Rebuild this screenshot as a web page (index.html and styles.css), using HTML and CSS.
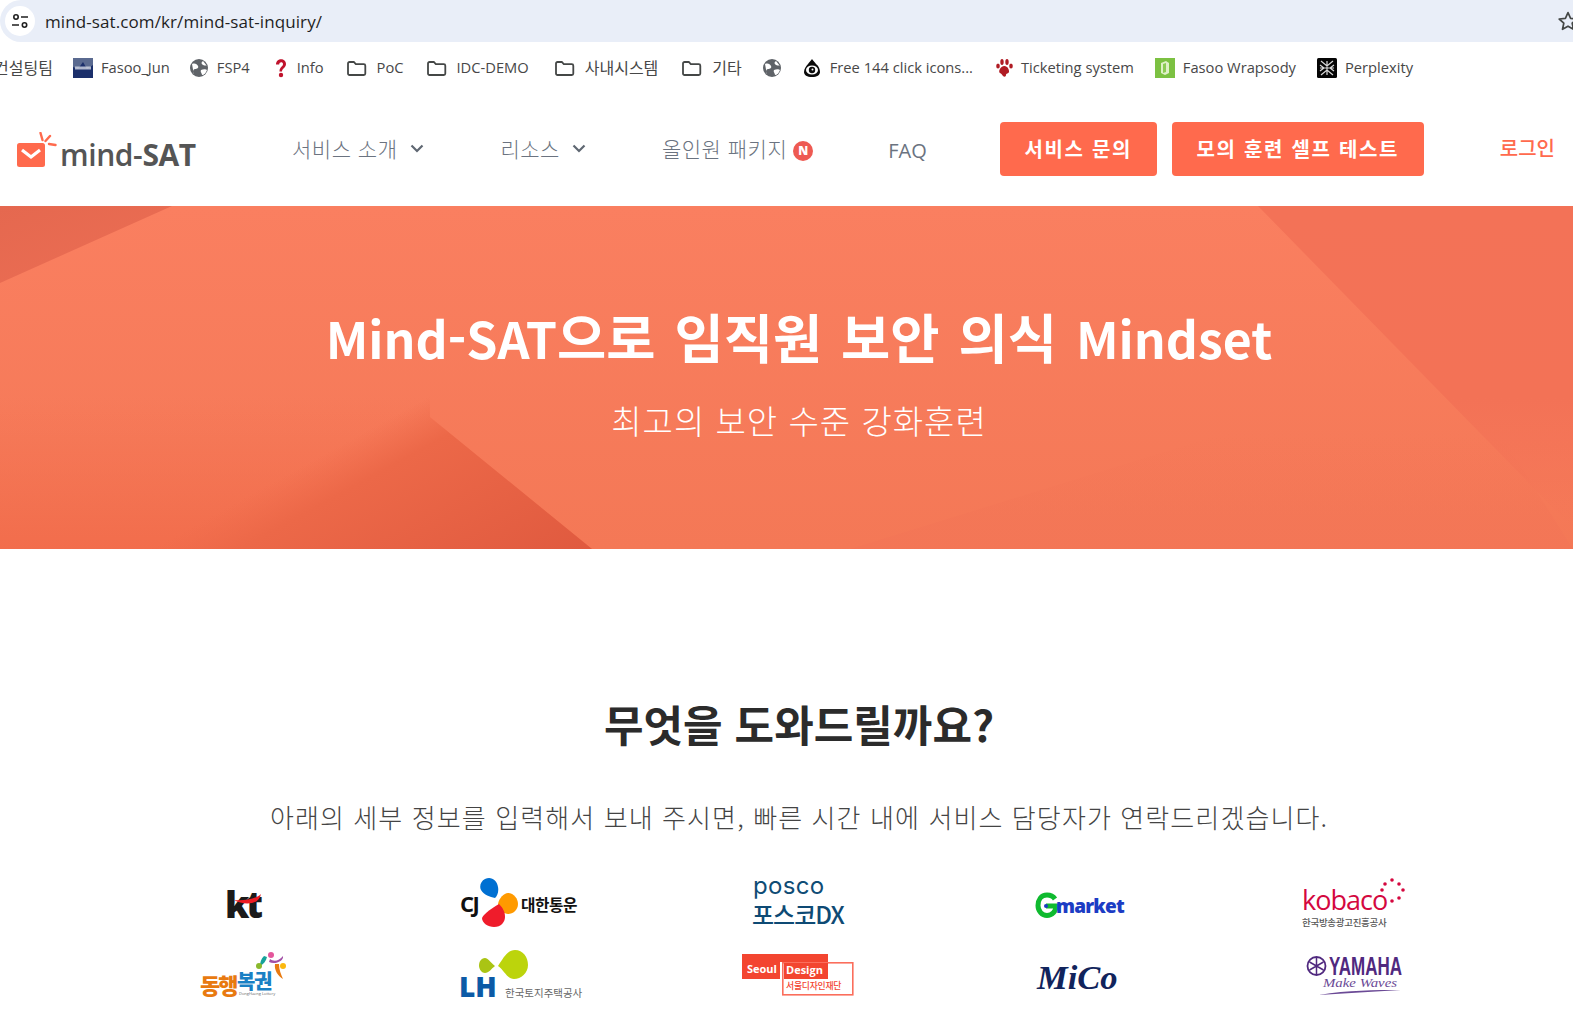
FILE: index.html
```html
<!DOCTYPE html>
<html lang="ko">
<head>
<meta charset="utf-8">
<title>mind-SAT 문의</title>
<link rel="stylesheet" href="styles.css">
</head>
<body>
<div class="omnibar">
  <span class="site-chip">
    <svg width="20" height="20" viewBox="0 0 20 20" fill="none" stroke="#1f1f1f" stroke-width="1.6"><circle cx="6" cy="6" r="2.2"/><path d="M11 6h7M2 14h7"/><circle cx="14.5" cy="14" r="2.2"/></svg>
  </span>
  <span class="url">mind-sat.com/kr/mind-sat-inquiry/</span>
  <svg class="star" width="22" height="22" viewBox="0 0 22 22" fill="none" stroke="#444746" stroke-width="1.7" stroke-linejoin="round"><path d="M11 2.6l2.6 5.7 6.2.7-4.6 4.2 1.3 6.1-5.5-3.1-5.5 3.1 1.3-6.1L2.2 9l6.2-.7z"/></svg>
</div>

<div class="bookmarks">
  <span class="bm bm-cut ko">컨설팅팀</span>
  <span class="bm bm-a"><svg width="20" height="20" viewBox="0 0 20 20"><rect width="20" height="20" fill="#1b2f6b"/><path d="M0 0h20v7l-6 4-4-7-5 7-5-2z" fill="#5a6a90"/><rect x="2" y="8.500" width="16" height="3" fill="#d5d9e6" opacity=".8"/></svg>Fasoo_Jun</span>
  <span class="bm bm-b"><svg width="20" height="20" viewBox="0 0 20 20"><circle cx="10" cy="10" r="9" fill="#5f6368"/><path d="M3 6c3-1 5 0 6 2s-1 3-3 3-2 3-1 6M14 3c-2 1-2 3 0 4s4 0 4 1M12 12c2-1 5-1 6 0-1 3-3 5-5 5 0-2-2-3-1-5z" fill="#fff"/></svg>FSP4</span>
  <span class="bm bm-c"><svg width="16" height="20" viewBox="0 0 16 20"><path d="M3 6.500c0-7 10-7 10-.5 0 4-4 4-4 7.500H6.500c0-5 3.500-4.500 3.500-7.500 0-2.500-3.800-2.500-3.800.5z" fill="#c0132c"/><circle cx="8" cy="17" r="2.200" fill="#c0132c"/></svg>Info</span>
  <span class="bm bm-d folder-item"><svg width="21" height="20" viewBox="0 0 21 20" fill="none" stroke="#444746" stroke-width="1.8"><path d="M2 5.500a1.500 1.500 0 0 1 1.500-1.500h4.300l2 2.200h8a1.500 1.500 0 0 1 1.500 1.500v7.800a1.500 1.500 0 0 1-1.500 1.500h-14.300a1.500 1.500 0 0 1-1.500-1.500z"/></svg>PoC</span>
  <span class="bm bm-e folder-item"><svg width="21" height="20" viewBox="0 0 21 20" fill="none" stroke="#444746" stroke-width="1.8"><path d="M2 5.500a1.500 1.500 0 0 1 1.500-1.500h4.300l2 2.200h8a1.500 1.500 0 0 1 1.500 1.500v7.800a1.500 1.500 0 0 1-1.500 1.500h-14.300a1.500 1.500 0 0 1-1.500-1.500z"/></svg>IDC-DEMO</span>
  <span class="bm bm-f folder-item ko"><svg width="21" height="20" viewBox="0 0 21 20" fill="none" stroke="#444746" stroke-width="1.8"><path d="M2 5.500a1.500 1.500 0 0 1 1.500-1.500h4.300l2 2.200h8a1.500 1.500 0 0 1 1.500 1.500v7.800a1.500 1.500 0 0 1-1.500 1.500h-14.300a1.500 1.500 0 0 1-1.500-1.500z"/></svg>사내시스템</span>
  <span class="bm bm-g folder-item ko"><svg width="21" height="20" viewBox="0 0 21 20" fill="none" stroke="#444746" stroke-width="1.8"><path d="M2 5.500a1.500 1.500 0 0 1 1.500-1.500h4.300l2 2.200h8a1.500 1.500 0 0 1 1.500 1.500v7.800a1.500 1.500 0 0 1-1.500 1.500h-14.300a1.500 1.500 0 0 1-1.500-1.500z"/></svg>기타</span>
  <span class="bm bm-h"><svg width="20" height="20" viewBox="0 0 20 20"><circle cx="10" cy="10" r="9" fill="#5f6368"/><path d="M3 6c3-1 5 0 6 2s-1 3-3 3-2 3-1 6M14 3c-2 1-2 3 0 4s4 0 4 1M12 12c2-1 5-1 6 0-1 3-3 5-5 5 0-2-2-3-1-5z" fill="#fff"/></svg></span>
  <span class="bm bm-i"><svg width="18" height="20" viewBox="0 0 18 20"><path d="M9 1c1 2 3 3 4 5 3 2 4 6 4 8 0 3-3 5-8 5s-8-2-8-5c0-3 2-6 4-8 1-2 3-3 4-5z" fill="#0a0a0a"/><ellipse cx="9" cy="12" rx="6" ry="4.500" fill="#fff"/><circle cx="9" cy="12" r="3.200" fill="#0a0a0a"/><circle cx="9.500" cy="11.500" r="1" fill="#fff"/></svg>Free 144 click icons...</span>
  <span class="bm bm-j"><svg width="18" height="20" viewBox="0 0 18 20" fill="#b01c24"><ellipse cx="3" cy="8" rx="1.800" ry="2.600"/><ellipse cx="7" cy="4" rx="1.700" ry="3"/><ellipse cx="12" cy="4" rx="1.700" ry="3"/><ellipse cx="16" cy="8" rx="1.800" ry="2.600"/><path d="M9.500 8c3 0 5 4 4.500 6s-3 1-3 3-2 2-3 1-1-2-3-3 0-7 4.500-7z"/></svg>Ticketing system</span>
  <span class="bm bm-k"><svg width="20" height="20" viewBox="0 0 20 20"><rect width="20" height="20" fill="#7cc142"/><path d="M6 5l5-2 3 2v10l-4 2-4-2z" fill="#dff0c8"/><path d="M8 6l3-1v9l-3 1z" fill="#8ccb55"/></svg>Fasoo Wrapsody</span>
  <span class="bm bm-l"><svg width="20" height="20" viewBox="0 0 20 20"><rect width="20" height="20" rx="1.500" fill="#050505"/><path d="M4 3l6 5 6-5M4 17l6-5 6 5M10 3v14M3 7l4 3-4 3M17 7l-4 3 4 3M3 10h14" fill="none" stroke="#d9d9d9" stroke-width="1.200"/></svg>Perplexity</span>
</div>

<header class="site-nav">
  <a class="logo">
    <svg class="logo-mark" width="40" height="36" viewBox="0 0 40 36"><rect x="0" y="11" width="28" height="24" rx="2.500" fill="#ff6a4d"/><path d="M5 18l9 7 9-7" fill="none" stroke="#fff" stroke-width="3.200"/><path d="M23.500 1l2 7M33 4l-4.500 5M38.500 13l-6.500-1" stroke="#ff6a4d" stroke-width="2.400" stroke-linecap="round"/></svg>
    <span class="logo-text">mind-<b>SAT</b></span>
  </a>
  <nav class="menu">
    <a class="menu-item m1">서비스 소개<svg class="chev chev-a" width="14" height="9" viewBox="0 0 14 9" fill="none" stroke="#5f6772" stroke-width="2.200"><path d="M1.500 1.500L7 7l5.500-5.500"/></svg></a>
    <a class="menu-item m2">리소스<svg class="chev chev-b" width="14" height="9" viewBox="0 0 14 9" fill="none" stroke="#5f6772" stroke-width="2.200"><path d="M1.500 1.500L7 7l5.500-5.500"/></svg></a>
    <a class="menu-item m3">올인원 패키지<span class="new-badge">N</span></a>
    <a class="menu-item m4">FAQ</a>
  </nav>
  <a class="btn b1">서비스 문의</a>
  <a class="btn b2">모의 훈련 셀프 테스트</a>
  <a class="login">로그인</a>
</header>

<section class="hero">
  <svg class="hero-bg" width="1573" height="343" viewBox="0 0 1573 343" aria-hidden="true">
    <defs>
      <linearGradient id="base" x1="0" y1="0" x2="0" y2="1"><stop offset="0" stop-color="#fa7f60"/><stop offset="1" stop-color="#f47856"/></linearGradient>
      <linearGradient id="tl" x1="0" y1="0" x2="1" y2="1"><stop offset="0" stop-color="#e5684f"/><stop offset="1" stop-color="#ec6e54"/></linearGradient>
      <linearGradient id="rt" gradientUnits="userSpaceOnUse" x1="0" y1="0" x2="0" y2="320"><stop offset="0" stop-color="#f37257"/><stop offset=".6" stop-color="#f37256"/><stop offset="1" stop-color="#f37256" stop-opacity="0"/></linearGradient>
      <linearGradient id="br" gradientUnits="userSpaceOnUse" x1="0" y1="227" x2="0" y2="343"><stop offset="0" stop-color="#f37556" stop-opacity="0"/><stop offset="1" stop-color="#f37556" stop-opacity=".7"/></linearGradient>
      <linearGradient id="lw" gradientUnits="userSpaceOnUse" x1="0" y1="190" x2="0" y2="343"><stop offset="0" stop-color="#f37050" stop-opacity="0"/><stop offset="1" stop-color="#f26d4c"/></linearGradient>
      <linearGradient id="bl" gradientUnits="userSpaceOnUse" x1="430" y1="190" x2="532" y2="376"><stop offset="0" stop-color="#ee6a4a" stop-opacity="0"/><stop offset=".2" stop-color="#ec6848"/><stop offset="1" stop-color="#e05a3f"/></linearGradient>
    </defs>
    <rect width="1573" height="343" fill="url(#base)"/>
    <polygon points="0,0 172,0 0,77" fill="url(#tl)"/>
    <polygon points="850,343 1225,227 1500,227 1573,343" fill="url(#br)"/>
    <polygon points="1258,0 1573,0 1573,322" fill="url(#rt)"/>
    <polygon points="0,190 430,190 430,211 592,343 0,343" fill="url(#lw)"/>
    <polygon points="430,190 430,211 592,343 150,343" fill="url(#bl)"/>
  </svg>
  <h1 class="hero-title"><span class="lat">Mind-SAT</span>으로 임직원 보안 의식 <span class="lat">Mindset</span></h1>
  <p class="hero-sub">최고의 보안 수준 강화훈련</p>
</section>

<section class="contact">
  <h2 class="contact-title">무엇을 도와드릴까요?</h2>
  <p class="contact-sub">아래의 세부 정보를 입력해서 보내 주시면, 빠른 시간 내에 서비스 담당자가 연락드리겠습니다.</p>
  <div class="logos">
    <div class="logo-cell">
      <svg width="60" height="50" viewBox="0 0 60 50"><text class="lg-kt" x="11" y="38">kt</text><path d="M20 20c10 1 22-1 27-6-1 5-4 8-9 9-6 1-13 0-18-3z" fill="#ed1c24"/></svg>
    </div>
    <div class="logo-cell">
      <svg width="130" height="56" viewBox="0 0 130 56"><path d="M28 2c6-3 12 1 13 8 1 5-1 9-3 11-5-1-11-3-14-8-2-4 0-9 4-11z" fill="#0070d2"/><path d="M41 27c1-6 6-11 10-11 6 0 10 6 10 11 0 6-5 10-10 10-4 0-8-4-10-10z" fill="#ff9a00"/><path d="M42 27c-5 3-15 9-17 14 0 5 6 9 12 9 7 0 11-5 11-10 0-6-3-10-6-13z" fill="#ef1c2b"/><text class="lg-cj" x="3" y="35">CJ</text><text class="lg-kor" x="64" y="34">대한통운</text></svg>
    </div>
    <div class="logo-cell">
      <svg width="100" height="56" viewBox="0 0 100 56"><text class="lg-posco" x="3" y="17">posco</text><text class="lg-pdx" x="2" y="47">포스코DX</text></svg>
    </div>
    <div class="logo-cell">
      <svg width="100" height="36" viewBox="0 0 100 36"><path d="M27 12c-2-3-5-4-8-4-6 0-9 5-9 10.500s4 10 9 10 9-4 9-9.500H18" fill="none" stroke="#0fba2f" stroke-width="5"/><circle cx="18" cy="19" r="2" fill="#1c3cc4"/><text class="lg-gm" x="28" y="26">market</text></svg>
    </div>
    <div class="logo-cell">
      <svg width="110" height="56" viewBox="0 0 110 56"><text class="lg-kob" x="1" y="33">kobaco</text><g fill="#d4083f"><circle cx="84" cy="7" r="1.800"/><circle cx="91" cy="3" r="1.800"/><circle cx="98" cy="7" r="1.800"/><circle cx="102" cy="13" r="1.800"/><circle cx="98" cy="21" r="1.800"/><circle cx="91" cy="24" r="1.800"/><circle cx="81" cy="13" r="1.800"/></g><text class="lg-kobs" x="1" y="49">한국방송광고진흥공사</text></svg>
    </div>
    <div class="logo-cell">
      <svg width="100" height="56" viewBox="0 0 100 56"><text class="lg-dh" x="6" y="46">동행</text><text class="lg-dh2" x="43" y="41">복권</text><text class="lg-dhs" x="45" y="47">DongHaeng Lottery</text><circle cx="77" cy="7" r="3" fill="#e4569b"/><path d="M70 8c-3 3-4 6-4 10 4-2 6-5 7-9z" fill="#16a29a"/><path d="M76 11c4 3 9 2 13-3 1 5-8 9-14 6z" fill="#a24fa6"/><circle cx="65" cy="18" r="3" fill="#8ab92d"/><circle cx="89" cy="18" r="3" fill="#fbb80f"/><path d="M81 16c-1 6 3 12 8 15-2-5-4-9-4-15z" fill="#e87a10"/></svg>
    </div>
    <div class="logo-cell">
      <svg width="130" height="56" viewBox="0 0 130 56"><path d="M41 18c5-7 9-16 17-16 8 0 13 7 13 15 0 8-7 14-14 14-7 0-10-9-16-13z" fill="#bcd40c"/><path d="M38 18c-5-4-7-8-10-8-4 0-6 4-6 7.500 0 4 3 7.500 6 7.500 4 0 6-4 10-7z" fill="#aac414"/><text class="lg-lh" x="2" y="49">LH</text><text class="lg-lhs" x="48" y="49">한국토지주택공사</text></svg>
    </div>
    <div class="logo-cell">
      <svg width="116" height="46" viewBox="0 0 116 46"><rect x="0" y="1" width="86" height="25" fill="#f34530"/><rect x="40.800" y="9.800" width="70" height="32" fill="#fff" stroke="#fb6e5c" stroke-width="1.600"/><rect x="42" y="10" width="44" height="16" fill="#f34530"/><rect x="38" y="9" width="2" height="17" fill="#fff"/><text class="lg-sd" x="5" y="20">Seoul</text><text class="lg-sd" x="44" y="21">Design</text><text class="lg-sds" x="44" y="36">서울디자인재단</text></svg>
    </div>
    <div class="logo-cell">
      <svg width="90" height="40" viewBox="0 0 90 40"><text class="lg-mico" x="4" y="33">MiCo</text></svg>
    </div>
    <div class="logo-cell">
      <svg width="100" height="44" viewBox="0 0 100 44"><circle cx="10.500" cy="12" r="9" fill="none" stroke="#50297f" stroke-width="1.800"/><path d="M10.500 4v16M3.500 8l14 8M3.500 16l14-8" stroke="#50297f" stroke-width="1.500"/><text class="lg-ya" x="23" y="21" textLength="73" lengthAdjust="spacingAndGlyphs">YAMAHA</text><text class="lg-mw" x="17" y="33" textLength="74" lengthAdjust="spacingAndGlyphs">Make Waves</text><path d="M13 41c30-5 55-5 82-5-28 2-55 3-82 5z" fill="#6b4a96"/></svg>
    </div>
  </div>
</section>
</body>
</html>
```

FILE: styles.css
```css
html, body { margin: 0; padding: 0; background: #fff; }
body {
  width: 1573px;
  height: 1021px;
  overflow: hidden;
  font-family: "Noto Sans CJK KR", "Noto Sans", sans-serif;
}
a { text-decoration: none; }

.omnibar {
  height: 42px;
  background: #e9eef8;
  display: flex;
  align-items: center;
  border-radius: 21px 0 0 21px;
}
.site-chip {
  width: 30px;
  height: 30px;
  margin-left: 5px;
  border-radius: 50%;
  background: #fff;
  display: flex;
  align-items: center;
  justify-content: center;
}
.url {
  margin-left: 10px;
  font-family: "Open Sans", sans-serif;
  font-size: 17px;
  color: #1f1f1f;
  flex: 1;
  letter-spacing: .1px;
}
.star { margin-right: -6px; }

.bookmarks {
  box-sizing: border-box;
  height: 52px;
  padding-bottom: 2px;
  display: flex;
  align-items: center;
  font-family: "Open Sans", "Noto Sans CJK KR", sans-serif;
  font-size: 14.7px;
  color: #474747;
  white-space: nowrap;
}
.bm { display: flex; align-items: center; gap: 8px; }
.bm svg { flex: none; margin-top: 2px; }
.ko { font-size: 16px; }
.folder-item { gap: 10px; }
.bm-cut { margin-left: -6px; width: 79px; }
.bm-b { margin-left: 19px; }
.bm-c { margin-left: 23px; }
.bm-d { margin-left: 22px; }
.bm-e { margin-left: 22px; }
.bm-f { margin-left: 25px; }
.bm-g { margin-left: 23px; }
.bm-h { margin-left: 20px; }
.bm-i { margin-left: 21px; gap: 9px; }
.bm-j { margin-left: 22px; }
.bm-k { margin-left: 21px; }
.bm-l { margin-left: 21px; }

.site-nav {
  height: 112px;
  display: flex;
  align-items: center;
  padding-left: 17px;
}
.logo { display: flex; align-items: flex-end; color: #555; width: 179px; flex: none; }
.logo-mark { flex: none; margin-right: 3px; }
.logo-text {
  font-family: "Open Sans", sans-serif;
  font-size: 30px;
  font-weight: 600;
  line-height: 36px;
  letter-spacing: -.4px;
  white-space: nowrap;
  margin-bottom: -5px;
}
.logo-text b { font-weight: 700; }
.menu { display: flex; align-items: center; margin: -4px 0 0 96px; font-size: 21px; color: #6b7380; font-weight: 300; }
.menu-item { display: flex; align-items: center; white-space: nowrap; letter-spacing: .5px; }
.chev-a { margin-left: 13px; }
.chev-b { margin-left: 12px; }
.m2 { margin-left: 76px; }
.m3 { margin-left: 76px; }
.m4 { margin: 4px 0 0 75px; font-family: "Open Sans", sans-serif; font-size: 20px; font-weight: 400; letter-spacing: 0; }
.new-badge {
  width: 20px; height: 20px; margin: 6px 0 0 6px;
  border-radius: 50%;
  background: #ee5a52; color: #fff;
  font-family: "Open Sans", sans-serif;
  font-size: 12px; font-weight: 800; line-height: 20px; text-align: center;
  letter-spacing: 0;
}
.btn {
  height: 54px;
  margin-top: -2px;
  background: #ff6a4d;
  border-radius: 4px;
  color: #fff;
  display: flex;
  align-items: center;
  justify-content: center;
  padding-bottom: 2px;
  box-sizing: border-box;
  font-size: 20px;
  font-weight: 700;
  white-space: nowrap;
  letter-spacing: 1.7px;
}
.b1 { width: 157px; margin-left: 73px; }
.b2 { width: 252px; margin-left: 15px; }
.login { margin: -6px 0 0 76px; font-size: 20px; font-weight: 500; color: #ff6a4d; letter-spacing: 0; white-space: nowrap; }

.hero {
  position: relative;
  height: 343px;
  padding-left: 25px;
  overflow: hidden;
  text-align: center;
  color: #fff;
}
.hero-bg { position: absolute; left: 0; top: 0; }
.hero-title {
  position: relative;
  margin: 0;
  padding-top: 92px;
  font-size: 53.5px;
  line-height: 76px;
  font-weight: 700;
  word-spacing: 4px;
}
.lat { font-size: 50px; }
.hero-sub {
  position: relative;
  margin: 0;
  padding-top: 21px;
  font-size: 33px;
  line-height: 48px;
  font-weight: 300;
  letter-spacing: 1px;
}

.contact { color: #2b2b2b; }
.contact-title { margin: 0; padding: 139px 0 0 25px; text-align: center; font-size: 43px; line-height: 70px; font-weight: 700; }
.contact-sub { margin: 0; padding: 39px 0 0 25px; text-align: center; font-size: 26px; line-height: 40px; font-weight: 300; color: #444; letter-spacing: 1.1px; white-space: nowrap; }
.logos {
  width: 1390px;
  margin: 32px 0 0 105px;
  display: grid;
  grid-template-columns: repeat(5, 1fr);
  grid-auto-rows: 71px;
}
.logo-cell { display: flex; align-items: center; justify-content: center; }

.lg-kt { font: 800 37px "Open Sans", sans-serif; fill: #1a1a1a; letter-spacing: -3.5px; }
.lg-cj { font: 700 22px "Open Sans", sans-serif; fill: #111; letter-spacing: -1.5px; }
.lg-kor { font: 700 15.7px "Noto Sans CJK KR", sans-serif; fill: #111; letter-spacing: -.4px; }
.lg-posco { font: 400 24px "Inter", sans-serif; fill: #0f4c75; letter-spacing: .3px; }
.lg-pdx { font: 500 24px "Noto Sans CJK KR", sans-serif; fill: #0e4a74; letter-spacing: -1px; }
.lg-gm { font: 800 19px "Open Sans", sans-serif; fill: #1c3cc4; letter-spacing: -.8px; }
.lg-kob { font: 500 27px "Open Sans", sans-serif; fill: #d4083f; letter-spacing: -1px; }
.lg-kobs { font: 500 9.500px "Noto Sans CJK KR", sans-serif; fill: #555; letter-spacing: -.3px; }
.lg-dh { font: 900 22px "Noto Sans CJK KR", sans-serif; fill: #e87a10; letter-spacing: -2px; }
.lg-dh2 { font: 900 20px "Noto Sans CJK KR", sans-serif; fill: #1a80c4; letter-spacing: -1.5px; }
.lg-dhs { font: 400 4px "Open Sans", sans-serif; fill: #666; }
.lg-lh { font: 800 28px "Open Sans", sans-serif; fill: #0c5aa6; }
.lg-lhs { font: 400 10.500px "Noto Sans CJK KR", sans-serif; fill: #666; }
.lg-sd { font: 700 11px "Open Sans", sans-serif; fill: #fff; }
.lg-sds { font: 500 8.800px "Noto Sans CJK KR", sans-serif; fill: #f34530; letter-spacing: -.2px; }
.lg-mico { font: italic 700 34.500px "Liberation Serif", serif; fill: #11245c; }
.lg-ya { font: 700 26px "Liberation Sans", sans-serif; fill: #50297f; }
.lg-mw { font: italic 400 13px "Liberation Serif", serif; fill: #6b4a96; }
```
